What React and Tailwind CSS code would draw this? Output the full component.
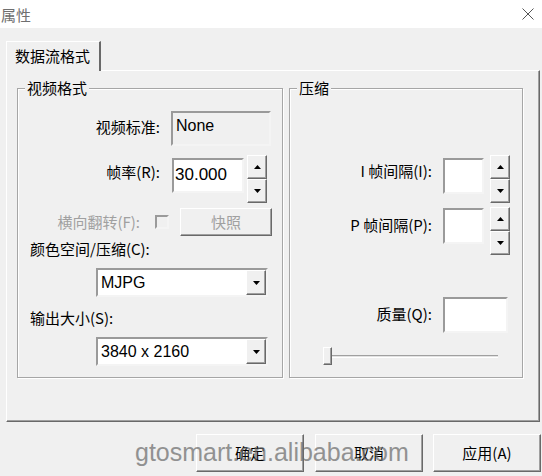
import React from "react";

const raised =
  "bg-[#f0f0f0] border border-t-white border-l-white border-r-[#696969] border-b-[#696969] shadow-[inset_-1px_-1px_0_#a0a0a0]";
const sunken =
  "border-2 border-t-[#9a9a9a] border-l-[#9a9a9a] border-r-[#f4f4f4] border-b-[#f4f4f4]";

function Arrow({ down }) {
  return (
    <svg width="7" height="4" viewBox="0 0 7 4">
      <path d={down ? "M0 0H7L3.5 4Z" : "M3.5 0L7 4H0Z"} fill="#000" />
    </svg>
  );
}

function Spinner() {
  return (
    <div className="flex flex-col w-[20px]">
      <div className={`${raised} h-[24px] flex items-center justify-center`}>
        <Arrow />
      </div>
      <div className={`${raised} h-[24px] flex items-center justify-center`}>
        <Arrow down />
      </div>
    </div>
  );
}

function Combo({ value }) {
  return (
    <div className={`${sunken} bg-white w-[172px] h-[29px] flex items-stretch`}>
      <span className="flex-1 pl-[3px] text-[16px] leading-[25px] font-['Liberation_Sans',sans-serif]">{value}</span>
      <div className={`${raised} w-[20px] flex items-center justify-center`}>
        <Arrow down />
      </div>
    </div>
  );
}

function GroupTitle({ children }) {
  return <div className="-mt-[11px] ml-[7px] w-fit px-[2px] bg-[#f0f0f0] leading-[20px]">{children}</div>;
}

export default function App() {
  return (
    <div className="relative w-[542px] h-[476px] overflow-hidden bg-[#f0f0f0] text-[15px] text-black font-['Noto_Sans_CJK_SC',sans-serif]">
      {/* title bar */}
      <div className="h-[28px] bg-white flex items-center justify-between pl-[1px] pr-[8px]">
        <span className="text-[15px] leading-none text-[#6f6f6f]">属性</span>
        <svg width="12" height="12" viewBox="0 0 12 12">
          <path d="M0.5 0.5L11.5 11.5M11.5 0.5L0.5 11.5" stroke="#555" strokeWidth="1" />
        </svg>
      </div>

      <div className="pl-[6px] pr-[2px] pt-[13px]">
        <div className="flex">
          <div className="relative z-10 -mb-[1px] h-[30px] w-[95px] bg-[#f0f0f0] border-t border-l border-white border-r-2 border-r-[#696969] flex items-center pl-[8px]">
            数据流格式
          </div>
        </div>

        <div className="h-[352px] border border-t-white border-l-white border-r-[#696969] border-b-[#696969] shadow-[inset_-1px_-1px_0_#a0a0a0] flex gap-[6px] pl-[10px] pt-[17px]">
          {/* 视频格式 */}
          <div className="w-[266px] h-[290px] border border-[#a6a6a6] shadow-[inset_1px_1px_0_#fff,1px_1px_0_#fff] flex flex-col">
            <GroupTitle>视频格式</GroupTitle>

            <div className="mt-[13px] flex items-center h-[35px]">
              <span className="w-[142px] text-right leading-[20px] -mt-[4px]">视频标准:</span>
              <div className={`${sunken} ml-[11px] w-[100px] h-[35px] pl-[3px] pt-[3px] text-[16px] leading-[20px] font-['Liberation_Sans',sans-serif]`}>
                None
              </div>
            </div>

            <div className="mt-[9px] flex items-start h-[48px]">
              <span className="w-[142px] text-right leading-[20px] mt-[7px]">帧率(R):</span>
              <div className={`${sunken} bg-white ml-[12px] mt-[3px] w-[72px] h-[35px] pl-[1px] pt-[5px] text-[17px] leading-[20px] font-['Liberation_Sans',sans-serif]`}>
                30.000
              </div>
              <div className="ml-[3px]">
                <Spinner />
              </div>
            </div>

            <div className="mt-[5px] flex items-center h-[28px]">
              <span className="w-[122px] text-right leading-[20px] text-[#a0a0a0]">横向翻转(F):</span>
              <div className={`${sunken} ml-[15px] w-[14px] h-[14px]`} />
              <div className={`${raised} ml-[11px] w-[92px] h-[28px] flex items-center justify-center text-[#a0a0a0]`}>
                快照
              </div>
            </div>

            <div className="mt-[3px] pl-[12px] leading-[20px]">颜色空间/压缩(C):</div>
            <div className="mt-[9px] ml-[78px]">
              <Combo value="MJPG" />
            </div>

            <div className="mt-[11px] pl-[12px] leading-[20px]">输出大小(S):</div>
            <div className="mt-[9px] ml-[78px]">
              <Combo value="3840 x 2160" />
            </div>
          </div>

          {/* 压缩 */}
          <div className="w-[234px] h-[290px] border border-[#a6a6a6] shadow-[inset_1px_1px_0_#fff,1px_1px_0_#fff] flex flex-col">
            <GroupTitle>压缩</GroupTitle>

            <div className="mt-[57px] flex items-start h-[48px]">
              <span className="w-[142px] text-right leading-[20px] mt-[6px]">I 帧间隔(I):</span>
              <div className={`${sunken} bg-white ml-[11px] mt-[3px] w-[41px] h-[36px]`} />
              <div className="ml-[6px]">
                <Spinner />
              </div>
            </div>

            <div className="mt-[4px] flex items-start h-[48px]">
              <span className="w-[142px] text-right leading-[20px] mt-[8px]">P 帧间隔(P):</span>
              <div className={`${sunken} bg-white ml-[11px] mt-[1px] w-[41px] h-[36px]`} />
              <div className="ml-[6px]">
                <Spinner />
              </div>
            </div>

            <div className="mt-[42px] flex items-center h-[36px]">
              <span className="w-[142px] text-right leading-[20px] -mt-[3px]">质量(Q):</span>
              <div className={`${sunken} bg-white ml-[11px] w-[65px] h-[36px]`} />
            </div>

            <div className="mt-[14px] ml-[33px] flex items-center h-[18px]">
              <div className={`${raised} w-[9px] h-[18px]`} />
              <div className="w-[166px] h-[3px] border-t border-t-[#a0a0a0] border-b border-b-white bg-[#e3e3e3]" />
            </div>
          </div>
        </div>
      </div>

      {/* buttons */}
      <div className="mt-[12px] flex justify-end pr-[1px]">
        <div className={`${raised} w-[108px] h-[38px] flex items-center justify-center`}>确定</div>
        <div className={`${raised} ml-[11px] w-[108px] h-[38px] flex items-center justify-center`}>取消</div>
        <div className={`${raised} ml-[10px] w-[108px] h-[38px] flex items-center justify-center`}>应用(A)</div>
      </div>

      {/* watermark */}
      <div className="pointer-events-none absolute left-[135px] top-[437px] text-[25px] leading-[30px] text-[#6a6a6a] opacity-70 font-['Liberation_Sans',sans-serif]">
        gtosmart.en.alibaba.com
      </div>
    </div>
  );
}
